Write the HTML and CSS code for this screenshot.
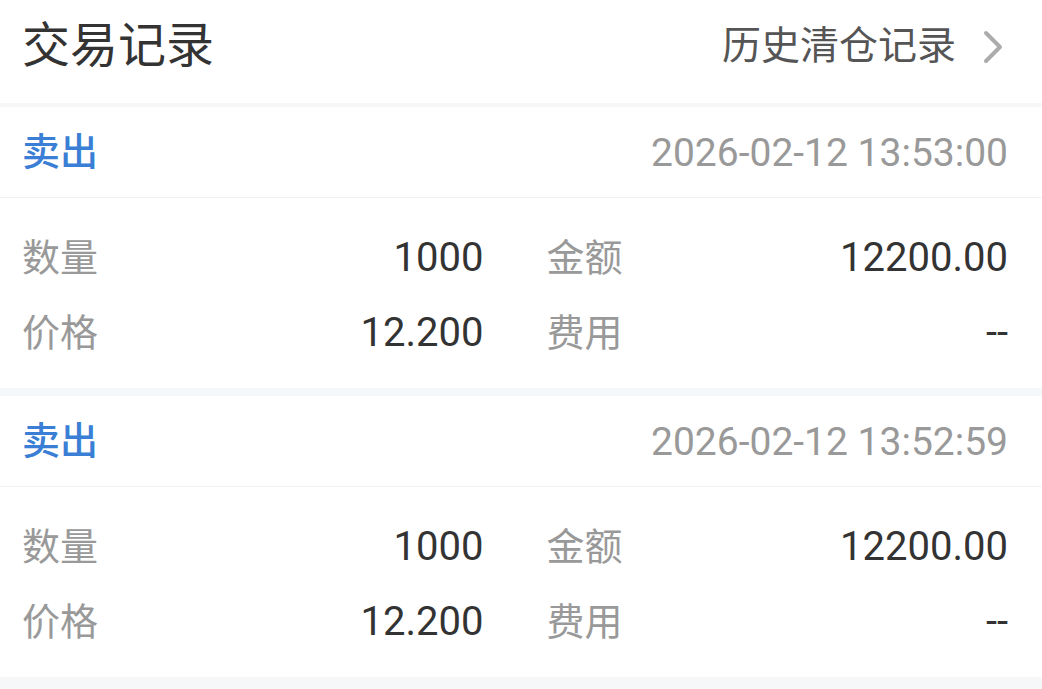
FILE: index.html
```html
<!DOCTYPE html>
<html lang="zh-CN">
<head>
    <meta charset="UTF-8">
    <meta name="viewport" content="width=device-width, initial-scale=1.0">
    <title>交易记录</title>
    <link rel="stylesheet" href="styles.css">
</head>
<body>
    <div class="header">
        <h1>交易记录</h1>
        <a class="history" href="#">
            历史清仓记录
            <svg class="chevron" width="22" height="34" viewBox="0 0 22 34">
                <path d="M4 3 L18 17 L4 31" fill="none" stroke="#acacac" stroke-width="4" stroke-linecap="round" stroke-linejoin="round"/>
            </svg>
        </a>
    </div>

    <div class="list">
        <div class="record">
            <div class="record-head">
                <span class="side">卖出</span>
                <span class="time">2026-02-12 13:53:00</span>
            </div>
            <div class="record-body">
                <div class="field"><span class="label">数量</span><span class="value">1000</span></div>
                <div class="field"><span class="label">金额</span><span class="value">12200.00</span></div>
                <div class="field"><span class="label">价格</span><span class="value">12.200</span></div>
                <div class="field"><span class="label">费用</span><span class="value">--</span></div>
            </div>
        </div>

        <div class="record">
            <div class="record-head">
                <span class="side">卖出</span>
                <span class="time">2026-02-12 13:52:59</span>
            </div>
            <div class="record-body">
                <div class="field"><span class="label">数量</span><span class="value">1000</span></div>
                <div class="field"><span class="label">金额</span><span class="value">12200.00</span></div>
                <div class="field"><span class="label">价格</span><span class="value">12.200</span></div>
                <div class="field"><span class="label">费用</span><span class="value">--</span></div>
            </div>
        </div>
    </div>
</body>
</html>
```

FILE: styles.css
```css
* {
    margin: 0;
    padding: 0;
    box-sizing: border-box;
}

body {
    font-family: Roboto, "Noto Sans CJK SC", sans-serif;
    background: #f5f7f8;
    color: #333;
}

.header {
    height: 103px;
    background: white;
    display: flex;
    align-items: center;
    justify-content: space-between;
    padding: 0 38px 0 22px;
    margin-bottom: 4px;
}

h1 {
    font-size: 48px;
    font-weight: 400;
    color: #333;
    line-height: 1;
    margin-top: -12px;
}

.history {
    display: flex;
    align-items: center;
    gap: 26px;
    font-size: 39px;
    color: #555;
    text-decoration: none;
    line-height: 1;
    margin-top: -10px;
}

.list {
    display: flex;
    flex-direction: column;
    gap: 8px;
}

.record {
    background: white;
}

.record-head {
    height: 91px;
    display: flex;
    align-items: center;
    justify-content: space-between;
    padding: 0 34px 0 22px;
    border-bottom: 1px solid #f2f2f2;
    font-size: 38px;
    line-height: 1;
}

.side {
    color: #3a7fd5;
    font-weight: 500;
}

.time {
    color: #999;
    font-size: 39px;
    padding-top: 3px;
}

.record-body {
    display: grid;
    grid-template-columns: 1fr 1fr;
    column-gap: 63px;
    padding: 22px 34px 18px 22px;
}

.field {
    height: 75px;
    display: flex;
    align-items: center;
    justify-content: space-between;
    font-size: 38px;
    line-height: 1;
}

.label {
    color: #999;
}

.value {
    color: #333;
    font-size: 40px;
}
```
